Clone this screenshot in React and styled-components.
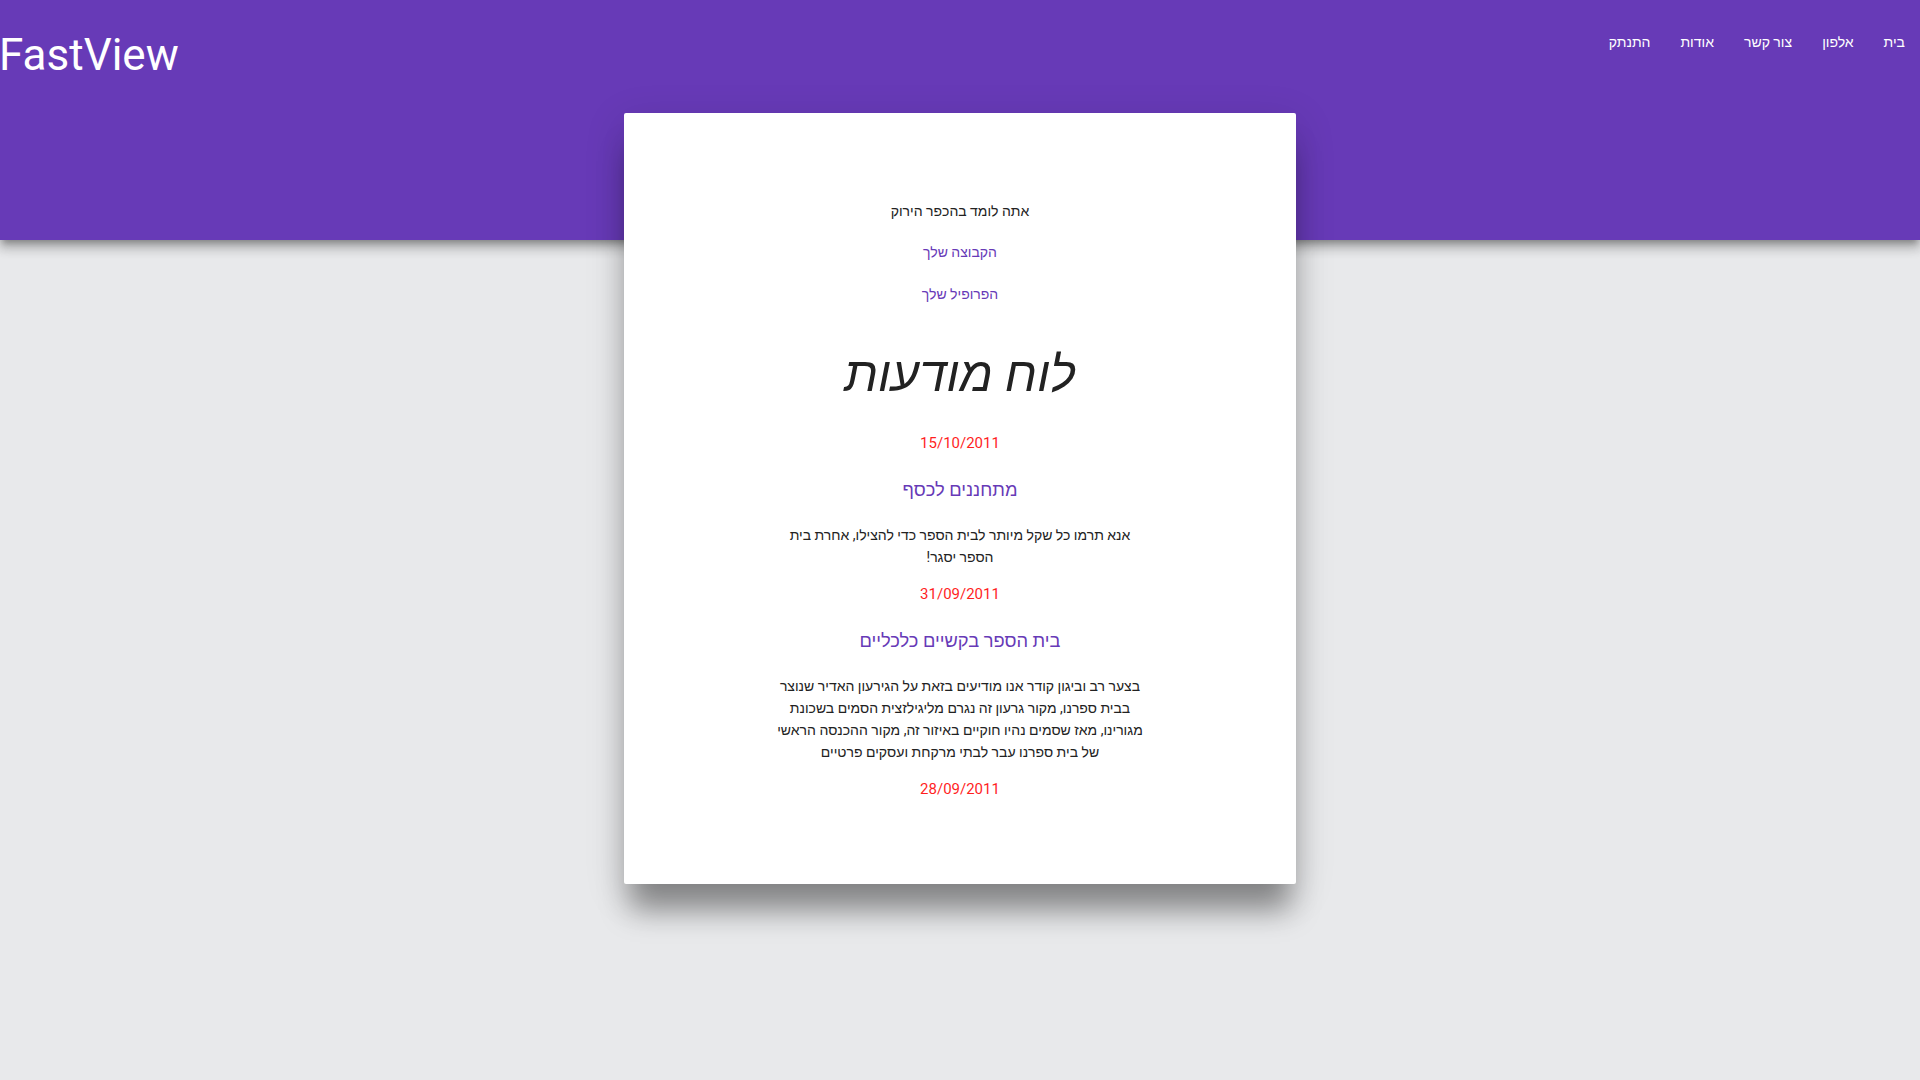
import styled, { createGlobalStyle } from "styled-components";

const PURPLE = "#673ab7";

const GlobalStyle = createGlobalStyle`
  html, body {
    margin: 0;
    padding: 0;
    background: #e8e9eb;
    font-family: Roboto, "Liberation Sans", sans-serif;
    color: rgba(0, 0, 0, 0.87);
  }
  * {
    box-sizing: border-box;
  }
`;

const links = ["בית", "אלפון", "צור קשר", "אודות", "התנתק"];

const posts = [
  {
    date: "15/10/2011",
    title: "מתחננים לכסף",
    body: "אנא תרמו כל שקל מיותר לבית הספר כדי להצילו, אחרת בית הספר יסגר!",
  },
  {
    date: "31/09/2011",
    title: "בית הספר בקשיים כלכליים",
    body: "בצער רב וביגון קודר אנו מודיעים בזאת על הגירעון האדיר שנוצר בבית ספרנו, מקור גרעון זה נגרם מליגילזצית הסמים בשכונת מגורינו, מאז שסמים נהיו חוקיים באיזור זה, מקור ההכנסה הראשי של בית ספרנו עבר לבתי מרקחת ועסקים פרטיים",
  },
];

export default function App() {
  return (
    <>
      <GlobalStyle />
      <Header>
        <NavBar>
          <Logo href="#">FastView</Logo>
          <NavLinks dir="rtl">
            {links.map((l) => (
              <li key={l}>
                <a href="#">{l}</a>
              </li>
            ))}
          </NavLinks>
        </NavBar>
      </Header>
      <Main>
        <Card dir="rtl">
          <Welcome>אתה לומד בהכפר הירוק</Welcome>
          <CardLink href="#">הקבוצה שלך</CardLink>
          <CardLink href="#">הפרופיל שלך</CardLink>
          <Title>לוח מודעות</Title>
          {posts.map((p) => (
            <Post key={p.date}>
              <PostDate>{p.date}</PostDate>
              <PostTitle>{p.title}</PostTitle>
              <PostBody>{p.body}</PostBody>
            </Post>
          ))}
          <PostDate>28/09/2011</PostDate>
        </Card>
      </Main>
    </>
  );
}

const Header = styled.header`
  height: 240px;
  background: ${PURPLE};
  box-shadow: 0 8px 10px 1px rgba(0, 0, 0, 0.16), 0 3px 14px 2px rgba(0, 0, 0, 0.12),
    0 6px 6px -3px rgba(0, 0, 0, 0.24);
  position: relative;
  z-index: 1;
`;

const NavBar = styled.nav`
  display: flex;
  justify-content: space-between;
  align-items: flex-start;
  color: #fff;
`;

const Logo = styled.a`
  color: #fff;
  text-decoration: none;
  font-size: 44px;
  line-height: 1;
  padding-top: 33px;
  margin-left: -1px;
`;

const NavLinks = styled.ul`
  list-style: none;
  margin: 0;
  padding: 0;
  display: flex;

  & a {
    display: block;
    color: #fff;
    text-decoration: none;
    font-size: 14px;
    line-height: 84px;
    padding: 0 15px;
  }
`;

const Main = styled.main`
  display: flex;
  justify-content: center;
  margin-top: -127px;
  padding-bottom: 120px;
  position: relative;
  z-index: 2;
`;

const Card = styled.section`
  width: 672px;
  height: 771px;
  background: #fff;
  border-radius: 2px;
  box-shadow: 0 32px 28px -6px rgba(0, 0, 0, 0.38), 0 10px 40px 2px rgba(0, 0, 0, 0.12);
  padding-top: 88px;
  display: flex;
  flex-direction: column;
  align-items: center;
  text-align: center;
`;

const Welcome = styled.p`
  margin: 0 0 21px;
  font-size: 14px;
  line-height: 20px;
  color: #222;
`;

const CardLink = styled.a`
  display: block;
  margin: 0 0 22px;
  font-size: 14px;
  line-height: 20px;
  color: ${PURPLE};
  text-decoration: none;
`;

const Title = styled.h1`
  margin: 19px 0 28px;
  font-size: 49px;
  line-height: 60px;
  font-weight: 400;
  font-style: italic;
  color: #222;
`;

const Post = styled.article`
  display: flex;
  flex-direction: column;
  align-items: center;
`;

const PostDate = styled.div`
  font-size: 15px;
  line-height: 20px;
  color: #ff1f1f;
  margin-bottom: 25px;
`;

const PostTitle = styled.h3`
  margin: 0 0 22px;
  font-size: 18.3px;
  line-height: 24px;
  font-weight: 400;
  color: ${PURPLE};
`;

const PostBody = styled.p`
  margin: 0 0 16px;
  width: 371px;
  font-size: 14px;
  line-height: 22px;
  color: #222;
`;
